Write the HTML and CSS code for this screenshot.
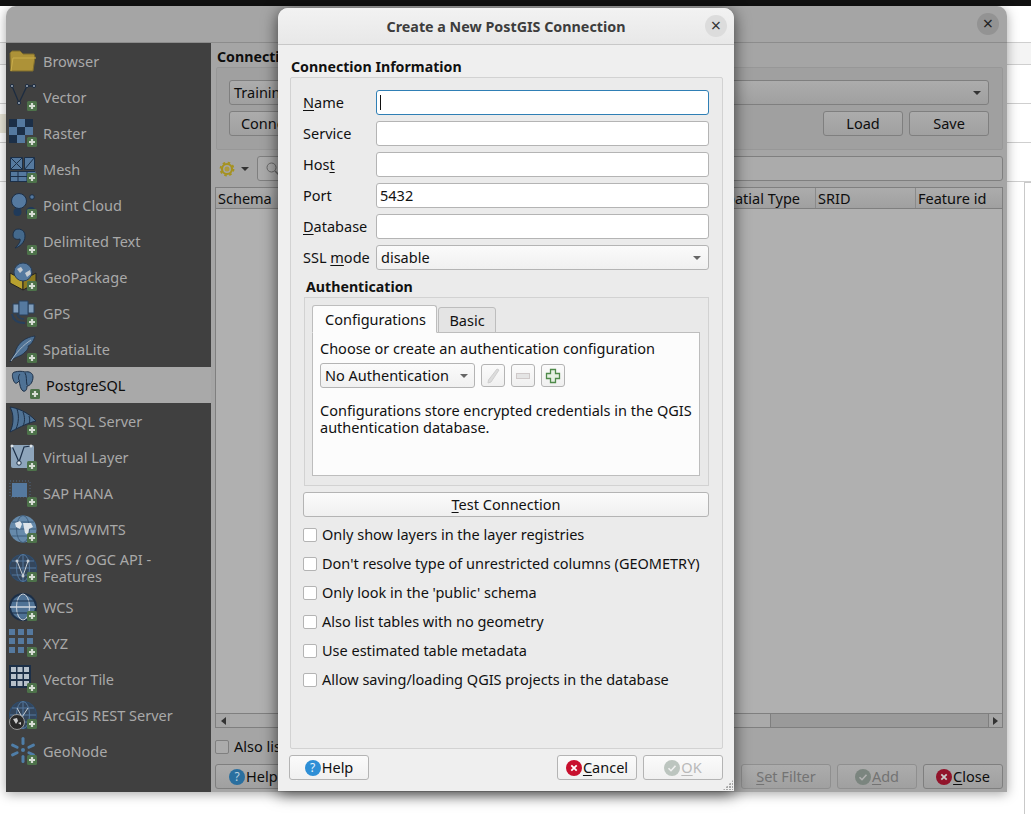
FILE: index.html
```html
<!DOCTYPE html>
<html lang="en">
<head>
<meta charset="utf-8">
<title>Create a New PostGIS Connection</title>
<link rel="stylesheet" href="styles.css">
</head>
<body>
<svg class="defs" aria-hidden="true">
  <defs>
    <symbol id="plus" viewBox="0 0 28 28">
      <rect x="18" y="18" width="10" height="10" rx="1.5" fill="#4d724a"/>
      <path d="M23 20v6M20 23h6" stroke="#d6dcd4" stroke-width="2.2"/>
    </symbol>
    <symbol id="globe" viewBox="0 0 28 28">
      <circle cx="14" cy="14" r="13.5" fill="#34465c" stroke="#2f4d6e" stroke-width="1.2"/>
      <ellipse cx="14" cy="14" rx="6.5" ry="13.5" fill="none" stroke="#55799f"/>
      <path d="M1 14h26M3 7h22M3 21h22M14 .5v27" stroke="#55799f" fill="none"/>
    </symbol>
  </defs>
</svg>

<div class="desk">
  <div class="black-bar"></div>
  <div class="strip s1"></div>
  <div class="strip s2"></div>
  <div class="strip s3"></div>
  <div class="strip s4"><div class="beige"></div></div>
  <div class="strip s5"></div>
  <div class="desk-box"></div>
</div>

<section class="main-win">
  <header class="main-title"><span class="win-x dim">×</span></header>
  <div class="main-body">
    <nav class="side">
      <div class="item"><svg class="ic" viewBox="0 0 28 28"><path d="M1.500 24 1 6l2-2h8l3 3h11l1 3-2 14z" fill="#ad9238" stroke="#7f6c2c"/><path d="M2 24l2-13h23" fill="none" stroke="#c9ad4b"/></svg><span>Browser</span></div>
      <div class="item"><svg class="ic" viewBox="0 0 28 28"><path d="M3 3l7 17 8-17h7" fill="none" stroke="#1d2c40" stroke-width="1.300"/><g fill="#8e9aa8" stroke="#1d2c40"><circle cx="3" cy="3" r="1.600"/><circle cx="10" cy="20" r="1.600"/><circle cx="18" cy="3" r="1.600"/><circle cx="25" cy="3" r="1.600"/></g><use href="#plus"/></svg><span>Vector</span></div>
      <div class="item"><svg class="ic" viewBox="0 0 28 28"><path d="M0 0h8v8H0zM16 0h8v8h-8zM8 8h8v8H8zM0 16h8v8H0z" fill="#1c2f47"/><path d="M8 0h8v8H8zM0 8h8v8H0zM16 8h8v8h-8zM8 16h8v8H8z" fill="#55799f"/><use href="#plus"/></svg><span>Raster</span></div>
      <div class="item"><svg class="ic" viewBox="0 0 28 28"><path d="M1.500 2.500h12v12h-12zM15.500 2.500h10v12h-10z" fill="#55799f" stroke="#1c2f47"/><path d="M1.500 2.500l12 12M13.500 2.500l-12 12M25.500 2.500l-10 12" stroke="#1c2f47" fill="none"/><path d="M1.500 16.500h25v10h-25z" fill="#55799f"/><path d="M1 16.500h25M1 21.500h17M9 16v11M18 16v11M1 26.500h17M1.500 16v11" stroke="#1c2f47"/><use href="#plus"/></svg><span>Mesh</span></div>
      <div class="item"><svg class="ic" viewBox="0 0 28 28"><circle cx="10" cy="10" r="7.500" fill="#55799f" stroke="#1c2f47"/><circle cx="23" cy="6" r="2.300" fill="#55799f" stroke="#1c2f47"/><circle cx="8.500" cy="21" r="4" fill="#1f3a5a"/><circle cx="22" cy="21" r="5" fill="#1f3a5a"/><use href="#plus"/></svg><span>Point Cloud</span></div>
      <div class="item"><svg class="ic" viewBox="0 0 28 28"><path d="M6 3c3-2 10-1 10 6 0 7-6 11-10 12 2-2 6-6 5-9-3 1-7 0-7-4 0-2 1-4 2-5z" fill="#44698c" stroke="#1c2f47"/><use href="#plus"/></svg><span>Delimited Text</span></div>
      <div class="item"><svg class="ic" viewBox="0 0 28 28"><path d="M1 10l13 7v10L1 20z" fill="#b8a12f" stroke="#222"/><path d="M27 10l-13 7v10l13-7z" fill="#8e7b20" stroke="#222"/><circle cx="14" cy="9" r="9" fill="#55799f" stroke="#28405c"/><path d="M8 6l4-2 2 3-3 3zM16 10l5-3 1 4-4 3z" fill="#c6ccd2"/><use href="#plus"/></svg><span>GeoPackage</span></div>
      <div class="item"><svg class="ic" viewBox="0 0 28 28"><path d="M4 5h6v9H4zM19 5h6v9h-6z" fill="#7f9cba" stroke="#28405c"/><path d="M10 2h9v14h-9z" fill="#55799f" stroke="#28405c"/><path d="M3 15c1 6 6 9 13 9" fill="none" stroke="#28405c" stroke-width="2"/><path d="M8 15c1 3 3 5 7 5" fill="none" stroke="#28405c" stroke-width="1.500"/><use href="#plus"/></svg><span>GPS</span></div>
      <div class="item"><svg class="ic" viewBox="0 0 28 28"><path d="M26 1C17 2 8 8 6 18l-5 9C6 21 12 22 16 17c2-1 4-5 3-6 3-1 6-6 7-10z" fill="#4f7295" stroke="#1c2f47" stroke-width=".8"/><path d="M22 5C14 10 7 18 2 26" stroke="#a4b4c4" fill="none"/><use href="#plus"/></svg><span>SpatiaLite</span></div>
      <div class="item on"><svg class="ic" viewBox="0 0 28 28"><path d="M3 1C0 1 0 5 1 8c1 3 2 5 4 4l2-2c1 3 1 8 4 10 3 1 4-2 4-5 3 0 6-4 6-9 0-4-4-6-8-5-3-1-7-1-10 0z" fill="#4f7295" stroke="#1c2f47"/><path d="M8 3C6 5 6 9 8 10M13 2c2 3 1 8 2 12" fill="none" stroke="#1c2f47"/><use href="#plus"/></svg><span>PostgreSQL</span></div>
      <div class="item"><svg class="ic" viewBox="0 0 28 28"><path d="M1 0c7 1 18 5 26 14-8 2-14 5-26 11 4-8 4-18 0-25z" fill="#4f7295" stroke="#1c2f47"/><path d="M8 2c2 6 2 13-1 20M14 5c2 5 2 10 0 14M20 9c1 3 1 5 0 8" stroke="#1c2f47" fill="none"/><use href="#plus"/></svg><span>MS SQL Server</span></div>
      <div class="item"><svg class="ic" viewBox="0 0 28 28"><rect x="2" y="2" width="23" height="23" rx="2" fill="#8ea5bb"/><path d="M3 3l7 16 5-15 7-1" fill="none" stroke="#1c2f47" stroke-width="1.200"/><circle cx="10" cy="20" r="2.200" fill="#dfe5ea" stroke="#1c2f47"/><g fill="#dfe5ea"><circle cx="3" cy="3" r="1.500"/><circle cx="22" cy="3" r="1.500"/></g><use href="#plus"/></svg><span>Virtual Layer</span></div>
      <div class="item"><svg class="ic" viewBox="0 0 28 28"><path d="M1 2h20v16H1z" fill="none" stroke="#55799f" stroke-dasharray="1 2" opacity=".7"/><rect x="3" y="4" width="15" height="14" fill="#55799f"/><use href="#plus"/></svg><span>SAP HANA</span></div>
      <div class="item"><svg class="ic" viewBox="0 0 28 28"><circle cx="14" cy="14" r="13.500" fill="#668aab"/><ellipse cx="14" cy="14" rx="6.500" ry="13.500" fill="none" stroke="#3f5e7d"/><path d="M1 14h26M3 7h22M3 21h22" stroke="#3f5e7d"/><path d="M6 8l5-2 2 3-2 5-4-2zM14 8h8l2 4-4 2-1 6-3-2-1-5z" fill="#dfe5ea"/><use href="#plus"/></svg><span>WMS/WMTS</span></div>
      <div class="item tall"><svg class="ic" viewBox="0 0 28 28"><use href="#globe"/><path d="M8 7l6 15 5-15" fill="none" stroke="#c8ced4"/><g fill="#c8ced4"><circle cx="8" cy="7" r="1.500"/><circle cx="14" cy="22" r="1.500"/><circle cx="19" cy="7" r="1.500"/></g><use href="#plus"/></svg><span>WFS / OGC API -<br>Features</span></div>
      <div class="item"><svg class="ic" viewBox="0 0 28 28"><circle cx="14" cy="14" r="14" fill="#1c2f47"/><circle cx="14" cy="14" r="12" fill="#4f7295"/><ellipse cx="14" cy="14" rx="6.500" ry="13" fill="none" stroke="#cfd7df"/><path d="M1 14h26" stroke="#cfd7df" stroke-width="1.500"/><path d="M3 8h22M3 20h22" stroke="#1c2f47"/><use href="#plus"/></svg><span>WCS</span></div>
      <div class="item"><svg class="ic" viewBox="0 0 28 28"><path d="M0 0h6v6H0zM9 0h6v6H9zM18 0h6v6h-6zM0 9h6v6H0zM9 9h6v6H9zM18 9h6v6h-6zM0 18h6v6H0zM9 18h6v6H9zM18 18h6v6h-6z" fill="#55799f"/><use href="#plus"/></svg><span>XYZ</span></div>
      <div class="item"><svg class="ic" viewBox="0 0 28 28"><rect width="22" height="23" fill="#1c2f47"/><path d="M2 2h5v5H2zM8.500 2h5v5h-5zM15 2h5v5h-5zM2 9h5v5H2zM8.500 9h5v5h-5zM15 9h5v5h-5zM2 16h5v5H2zM8.500 16h5v5h-5zM15 16h5v5h-5z" fill="#b7c1cb"/><use href="#plus"/></svg><span>Vector Tile</span></div>
      <div class="item"><svg class="ic" viewBox="0 0 28 28"><use href="#globe"/><path d="M8 7l5 9 6-9" fill="none" stroke="#c8ced4"/><circle cx="8" cy="21" r="7.500" fill="#2a2a2a" stroke="#999"/><path d="M4 18l4-1 1 3-2 3zM9 22l3-1v3z" fill="#ccc"/><use href="#plus"/></svg><span>ArcGIS REST Server</span></div>
      <div class="item"><svg class="ic" viewBox="0 0 28 28"><g fill="#4f7ea8"><circle cx="14" cy="13" r="2"/><rect x="12.500" y="0" width="3" height="8" rx="1.500"/><rect x="12.500" y="18" width="3" height="8" rx="1.500"/><rect x="12.500" y="0" width="3" height="8" rx="1.500" transform="rotate(65 14 13)"/><rect x="12.500" y="0" width="3" height="8" rx="1.500" transform="rotate(115 14 13)"/><rect x="12.500" y="0" width="3" height="8" rx="1.500" transform="rotate(245 14 13)"/><rect x="12.500" y="0" width="3" height="8" rx="1.500" transform="rotate(295 14 13)"/></g><use href="#plus"/></svg><span>GeoNode</span></div>
    </nav>
    <main class="pane">
      <h2 class="bg-heading">Connections</h2>
      <div class="bg-group">
        <div class="bg-btn bg-combo">Training<i class="arrow bg-arrow"></i></div>
        <div class="bg-row">
          <div class="bg-btn conn">Connect</div>
          <div class="bg-btn load">Load</div>
          <div class="bg-btn load">Save</div>
        </div>
      </div>
      <div class="bg-search-row">
        <svg class="gear" viewBox="0 0 16 16"><circle cx="8" cy="8" r="5" fill="none" stroke="#a59220" stroke-width="2.200"/><circle cx="8" cy="8" r="6.500" fill="none" stroke="#a59220" stroke-width="1.800" stroke-dasharray="2.500 2.600"/><circle cx="8" cy="8" r="2.500" fill="#ad9a3c"/></svg>
        <i class="arrow gear-arrow"></i>
        <div class="bg-search"><svg class="loupe" viewBox="0 0 14 14"><circle cx="5.500" cy="5.500" r="4.500" fill="none" stroke="#666"/><path d="M9 9l4 4" stroke="#666" stroke-width="1.400"/></svg></div>
      </div>
      <div class="table">
        <div class="thead">
          <span class="th th-schema">Schema</span>
          <span class="th th-type">Spatial Type</span>
          <span class="th th-srid">SRID</span>
          <span class="th th-fid">Feature id</span>
        </div>
        <div class="tbody"></div>
        <div class="hscroll">
          <span class="sc-btn"><i class="tri-l"></i></span>
          <span class="thumb"></span>
          <span class="sc-btn"><i class="tri-r"></i></span>
        </div>
      </div>
      <label class="also"><i class="bg-check"></i>Also list tables with no geometry</label>
      <div class="bg-foot">
        <div class="bg-btn foot-help"><span class="dot dot-help-dim">?</span><span>Help</span></div>
        <div class="spacer"></div>
        <div class="bg-btn foot-filter off"><span><u>S</u>et Filter</span></div>
        <div class="bg-btn foot-add off"><svg class="bi" viewBox="0 0 16 16"><circle cx="8" cy="8" r="8" fill="#7b857f"/><path d="M4.500 8.200l2.500 2.500 4.500-5" fill="none" stroke="#b1b1b1" stroke-width="1.600"/></svg><span><u>A</u>dd</span></div>
        <div class="bg-btn foot-add"><svg class="bi" viewBox="0 0 16 16"><circle cx="8" cy="8" r="8" fill="#92142b"/><path d="M5.300 5.300l5.400 5.400M10.700 5.300l-5.400 5.400" stroke="#c9c9c9" stroke-width="1.800"/></svg><span><u>C</u>lose</span></div>
      </div>
    </main>
  </div>
</section>

<section class="dialog">
  <header class="dlg-title">
    <span class="dlg-title-text">Create a New PostGIS Connection</span>
    <span class="win-x">×</span>
  </header>
  <div class="dlg-body">
    <h2 class="heading">Connection Information</h2>
    <div class="group">
      <div class="form">
        <label class="lbl"><u>N</u>ame</label><div class="field focus"><i class="caret"></i></div>
        <label class="lbl">Service</label><div class="field"></div>
        <label class="lbl">Hos<u>t</u></label><div class="field"></div>
        <label class="lbl">Port</label><div class="field">5432</div>
        <label class="lbl"><u>D</u>atabase</label><div class="field"></div>
        <label class="lbl">SSL <u>m</u>ode</label><div class="btn combo">disable<i class="arrow"></i></div>
      </div>
      <h3 class="heading auth-heading">Authentication</h3>
      <div class="auth">
        <div class="tabs">
          <div class="tab active">Configurations</div>
          <div class="tab">Basic</div>
        </div>
        <div class="tab-pane">
          <p class="line">Choose or create an authentication configuration</p>
          <div class="tools">
            <div class="btn combo auth-combo">No Authentication<i class="arrow"></i></div>
            <div class="btn tool"><svg viewBox="0 0 16 16" class="ti"><path d="M12 1l2 1-8 12-3 1 .5-3z" fill="#dcdcdc" stroke="#cfcfcf"/></svg></div>
            <div class="btn tool"><svg viewBox="0 0 16 16" class="ti"><rect x="1.500" y="5.500" width="13" height="5" fill="#e4e4e4" stroke="#cfc9c9"/></svg></div>
            <div class="btn tool"><svg viewBox="0 0 16 16" class="ti"><path d="M5.500 1.500h5v4h4v5h-4v4h-5v-4h-4v-5h4z" fill="#e6f0e3" stroke="#4f8a4a" stroke-width="1.300"/></svg></div>
          </div>
          <p class="para">Configurations store encrypted credentials in the QGIS authentication database.</p>
        </div>
      </div>
      <div class="btn test"><u>T</u>est Connection</div>
      <ul class="checks">
        <li class="check"><i class="box"></i><span>Only show layers in the layer registries</span></li>
        <li class="check"><i class="box"></i><span>Don't resolve type of unrestricted columns (GEOMETRY)</span></li>
        <li class="check"><i class="box"></i><span>Only look in the 'public' schema</span></li>
        <li class="check"><i class="box"></i><span>Also list tables with no geometry</span></li>
        <li class="check"><i class="box"></i><span>Use estimated table metadata</span></li>
        <li class="check"><i class="box"></i><span>Allow saving/loading QGIS projects in the database</span></li>
      </ul>
    </div>
    <div class="dlg-foot">
      <div class="btn fbtn"><span class="dot">?</span><span>Help</span></div>
      <div class="spacer"></div>
      <div class="btn fbtn"><svg class="bi" viewBox="0 0 16 16"><circle cx="8" cy="8" r="8" fill="#c8102e"/><path d="M5.300 5.300l5.400 5.400M10.700 5.300l-5.400 5.400" stroke="#fff" stroke-width="1.800"/></svg><span><u>C</u>ancel</span></div>
      <div class="btn fbtn off-light"><svg class="bi" viewBox="0 0 16 16"><circle cx="8" cy="8" r="8" fill="#bcc5bf"/><path d="M4.500 8.200l2.500 2.500 4.500-5" fill="none" stroke="#f1f1f1" stroke-width="1.600"/></svg><span><u>O</u>K</span></div>
    </div>
    <div class="grip"></div>
  </div>
</section>
</body>
</html>
```
FILE: styles.css
```css
* { box-sizing: border-box; }
html, body { margin: 0; height: 100%; }
body {
  position: relative;
  width: 1031px;
  height: 814px;
  overflow: hidden;
  background: #fff;
  font-family: "Noto Sans", "Liberation Sans", sans-serif;
  font-size: 14.5px;
  line-height: 17px;
  color: #111;
}
h2, h3, p, ul { margin: 0; padding: 0; font-size: inherit; }
i { display: block; font-style: normal; }
u { text-underline-offset: 2px; text-decoration-thickness: 1px; }
.defs { position: absolute; width: 0; height: 0; }
.spacer { flex: 1; }

/* desktop behind the windows */
.desk { height: 100%; display: flex; flex-direction: column; }
.black-bar { height: 6px; background: #111; }
.strip { border-bottom: 1px solid #cfcfcf; }
.s1 { height: 37px; }
.s2 { height: 22px; background: #f4f4f4; }
.s3 { height: 39px; }
.s4 { height: 39px; }
.s5 { height: 39px; }
.beige { width: 6px; height: 19px; margin-top: 10px; background: #e7e4d6; }
.desk-box { flex: 1; margin-left: 1024px; border-left: 1px solid #c9c9c9; border-top: 1px solid #c9c9c9; }

/* QGIS data source manager, dimmed */
.main-win {
  position: absolute;
  left: 6px;
  top: 6px;
  width: 1001px;
  height: 786px;
  border-radius: 10px 10px 0 0;
  background: #a5a5a5;
  box-shadow: 0 2px 12px rgba(0, 0, 0, .35);
  display: flex;
  flex-direction: column;
  color: #0e0e0e;
  overflow: hidden;
}
.main-title {
  height: 37px;
  flex: none;
  border-bottom: 1px solid #8c8c8c;
  padding: 7px 8px 0 0;
  display: flex;
  justify-content: flex-end;
}
.win-x {
  width: 22px;
  height: 22px;
  border-radius: 50%;
  background: #dcdcdc;
  color: #333;
  font-size: 18px;
  line-height: 21px;
  text-align: center;
}
.win-x.dim { background: #939393; color: #222; }
.main-body { flex: 1; display: flex; min-height: 0; }

.side { width: 205px; background: #404040; color: #a9a9a9; flex: none; }
.item { height: 36px; padding-left: 3px; display: flex; align-items: center; gap: 6px; }
.item.tall { height: 42px; }
.item.on { background: #a9a9a9; color: #0c0c0c; padding-left: 6px; }
.ic { width: 28px; height: 28px; flex: none; overflow: visible; }

.pane { flex: 1; min-width: 0; display: flex; flex-direction: column; padding: 4px 4px 3px 4px; }
.bg-heading { font-weight: 700; font-size: 14.2px; line-height: 20px; padding-left: 2px; }
.bg-group {
  margin-left: 1px;
  height: 83px;
  border: 1px solid #979797;
  border-radius: 2px;
  padding: 12px 13px 0 12px;
  background: #a0a0a0;
}
.bg-btn {
  height: 25px;
  border: 1px solid #7f7f7f;
  border-radius: 3px;
  background: linear-gradient(#acacac, #a0a0a0);
  display: flex;
  align-items: center;
  justify-content: center;
  flex: none;
}
.bg-combo { justify-content: flex-start; padding-left: 4px; }
.bg-row { display: flex; gap: 6px; margin-top: 6px; }
.conn { width: 80px; margin-right: auto; }
.load { width: 80px; }
.bg-search-row { height: 25px; margin-top: 6px; display: flex; align-items: center; padding-left: 4px; }
.gear { width: 16px; height: 16px; flex: none; }
.bg-search {
  flex: 1;
  height: 25px;
  border: 1px solid #7f7f7f;
  border-radius: 3px;
  background: #ababab;
  padding: 5px 0 0 8px;
}
.loupe { width: 14px; height: 14px; display: block; }
.table { flex: 1; margin: 6px 0 0 0; border: 1px solid #7f7f7f; display: flex; flex-direction: column; min-height: 0; background: #b0b0b0; }
.thead { height: 21px; display: flex; border-bottom: 1px solid #7f7f7f; background: linear-gradient(#acacac, #a0a0a0); flex: none; }
.th { padding-left: 2px; line-height: 20px; border-right: 1px solid #8a8a8a; }
.th-schema { width: 401px; }
.th-type { width: 199px; text-align: right; padding-right: 15px; }
.th-srid { width: 100px; }
.th-fid { flex: 1; border-right: 0; }
.tbody { flex: 1; }
.hscroll { height: 14px; display: flex; border-top: 1px solid #7f7f7f; background: #9a9a9a; flex: none; }
.sc-btn { width: 14px; background: #a5a5a5; display: flex; align-items: center; justify-content: center; }
.hscroll .sc-btn:last-child { border-left: 1px solid #7f7f7f; }
.thumb { width: 541px; background: #aaa; border-right: 1px solid #7f7f7f; margin-right: auto; }
.tri-l { border: 4px solid transparent; border-right: 5px solid #333; border-left: 0; }
.tri-r { border: 4px solid transparent; border-left: 5px solid #333; border-right: 0; }
.also { height: 17px; margin-top: 10px; display: flex; align-items: center; gap: 5px; }
.bg-check { width: 14px; height: 14px; border: 1px solid #7f7f7f; border-radius: 2px; background: #ababab; }
.bg-foot { display: flex; gap: 6px; margin-top: 9px; }
.foot-help { width: 80px; justify-content: flex-start; padding-left: 13px; gap: 1px; }
.foot-filter { width: 90px; }
.foot-add { width: 80px; gap: 1px; }
.off { color: #737373; border-color: #8f8f8f; }
.dot {
  width: 16px;
  height: 16px;
  border-radius: 50%;
  background: #2e8fd6;
  color: #e8f3fb;
  font-size: 12px;
  line-height: 16px;
  text-align: center;
  flex: none;
}
.dot-help-dim { background: #2a6f9f; color: #bcd0dd; }
.bi { width: 16px; height: 16px; flex: none; }

/* dialog */
.dialog {
  position: absolute;
  left: 278px;
  top: 8px;
  width: 456px;
  height: 783px;
  border-radius: 10px 10px 0 0;
  background: #efefef;
  box-shadow: 0 3px 16px rgba(0, 0, 0, .65);
  display: flex;
  flex-direction: column;
}
.dlg-title {
  height: 37px;
  flex: none;
  border-bottom: 1px solid #c8c8c8;
  background: linear-gradient(#f2f2f2, #e8e8e8);
  border-radius: 10px 10px 0 0;
  padding: 7px 7px 0 0;
  display: flex;
  align-items: flex-start;
}
.dlg-title-text { flex: 1; text-align: center; font-weight: 700; font-size: 14.3px; color: #3d3d3d; line-height: 24px; padding-left: 29px; }
.dlg-body { position: relative; flex: 1; padding: 12px 11px 0 12px; display: flex; flex-direction: column; min-height: 0; }
.heading { font-weight: 700; font-size: 14.2px; line-height: 20px; margin-left: 1px; }
.group {
  height: 672px;
  border: 1px solid #d2d2d2;
  border-radius: 2px;
  background: #ebebeb;
  padding: 12px 13px 0 12px;
}
.form { display: grid; grid-template-columns: 73px 1fr; grid-auto-rows: 25px; row-gap: 6px; align-items: center; }
.lbl { display: block; white-space: nowrap; }
.field {
  height: 25px;
  border: 1px solid #b4b4b4;
  border-radius: 3px;
  background: #fff;
  padding-left: 3px;
  line-height: 23px;
}
.field.focus { border-color: #2f7fb5; }
.caret { width: 1px; height: 15px; margin-top: 4px; background: #111; }
.btn {
  border: 1px solid #b4b4b4;
  border-radius: 3px;
  background: linear-gradient(#fbfbfb, #f0f0f0);
}
.combo { height: 25px; display: flex; align-items: center; padding-left: 4px; }
.arrow { width: 0; height: 0; border: 4px solid transparent; border-top: 4px solid #666; border-bottom: 0; margin-left: auto; margin-right: 7px; flex: none; }
.gear-arrow { margin: 0 8px 0 6px; border-top-color: #333; }
.bg-arrow { margin-right: 7px; border-top-color: #333; }
.auth-heading { margin: 7px 0 0 3px; }
.auth {
  margin-left: 1px;
  height: 189px;
  border: 1px solid #d2d2d2;
  background: #e9e9e9;
  padding: 7px 8px 0 7px;
}
.tabs { display: flex; height: 28px; align-items: flex-end; position: relative; z-index: 1; margin-bottom: -1px; }
.tab {
  height: 26px;
  padding: 0 12px;
  border: 1px solid #bdbdbd;
  border-radius: 3px 3px 0 0;
  line-height: 24px;
  background: #e4e4e4;
}
.tab.active { height: 28px; line-height: 26px; width: 125px; background: #fcfcfc; border-bottom-color: #fcfcfc; margin-right: 1px; }
.tab:not(.active) { width: 58px; padding: 0; text-align: center; }
.tab-pane { height: 144px; border: 1px solid #bdbdbd; background: #fcfcfc; padding: 7px 7px 0 7px; }
.line { line-height: 17px; }
.tools { display: flex; gap: 6px; margin-top: 6px; align-items: center; }
.auth-combo { width: 155px; height: 25px; }
.auth-combo .arrow { margin-right: 6px; }
.tool { width: 24px; height: 23px; display: flex; align-items: center; justify-content: center; }
.ti { width: 16px; height: 16px; }
.para { margin-top: 14px; }
.test { height: 25px; margin-top: 6px; text-align: center; line-height: 23px; }
.checks { list-style: none; margin-top: 9px; }
.check { height: 17px; margin-bottom: 12px; display: flex; align-items: center; gap: 5px; }
.box { width: 14px; height: 14px; border: 1px solid #b4b4b4; border-radius: 2px; background: #fff; flex: none; }
.dlg-foot { display: flex; gap: 6px; margin: 6px 0 0 -1px; }
.fbtn { width: 80px; height: 25px; display: flex; align-items: center; justify-content: center; gap: 1px; }
.off-light { color: #b9b9b9; }
.grip {
  position: absolute;
  right: 1px;
  bottom: 1px;
  width: 10px;
  height: 10px;
  background: radial-gradient(circle at 1px 1px, #a8a8a8 1px, transparent 1px) 0 0 / 3px 3px;
  clip-path: polygon(100% 0, 100% 100%, 0 100%);
}
```
